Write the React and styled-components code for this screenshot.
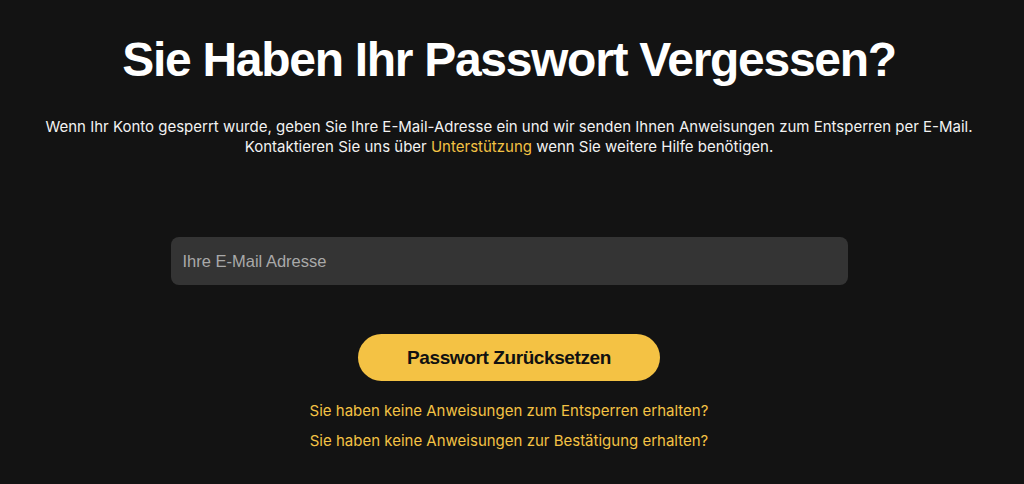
import React from "react";
import styled, { createGlobalStyle } from "styled-components";

const GlobalStyle = createGlobalStyle`
  html, body {
    margin: 0;
    padding: 0;
    background: #131313;
  }
  body {
    font-family: Inter, "Liberation Sans", sans-serif;
  }
`;

const Page = styled.main`
  min-height: 484px;
  display: flex;
  flex-direction: column;
  align-items: center;
  padding: 28px 6px 0 0;
  box-sizing: border-box;
  color: #ffffff;
`;

const Title = styled.h1`
  margin: 0;
  font-family: "Liberation Sans", Arial, sans-serif;
  font-weight: 700;
  font-size: 48px;
  line-height: 64px;
  letter-spacing: -1.3px;
  color: #ffffff;
`;

const Lead = styled.p`
  margin: 25px 0 0;
  font-size: 15px;
  line-height: 20px;
  text-align: center;
  color: #f2f2f2;
`;

const Link = styled.a`
  color: #f4c244;
  text-decoration: none;
  cursor: pointer;
`;

const Form = styled.form`
  width: 677px;
  margin-top: 80px;
  display: flex;
  flex-direction: column;
  align-items: center;
`;

const EmailInput = styled.input`
  width: 100%;
  height: 48px;
  box-sizing: border-box;
  border: none;
  border-radius: 8px;
  background: #343434;
  padding: 0 12px;
  font-family: "Liberation Sans", Arial, sans-serif;
  font-size: 16.5px;
  color: #ffffff;
  outline: none;
  &::placeholder {
    color: #a9a9a9;
  }
`;

const SubmitButton = styled.button`
  margin-top: 49px;
  width: 302px;
  height: 47px;
  border: none;
  border-radius: 24px;
  background: #f4c244;
  color: #111111;
  font-family: "Liberation Sans", Arial, sans-serif;
  font-weight: 700;
  font-size: 19px;
  letter-spacing: -0.4px;
  cursor: pointer;
`;

const HelpLinks = styled.div`
  margin-top: 20px;
  display: flex;
  flex-direction: column;
  align-items: center;
  gap: 10px;
`;

const HelpLink = styled(Link)`
  font-size: 15px;
  line-height: 20px;
`;

export default function App() {
  return (
    <>
      <GlobalStyle />
      <Page>
        <Title>Sie Haben Ihr Passwort Vergessen?</Title>
        <Lead>
          Wenn Ihr Konto gesperrt wurde, geben Sie Ihre E-Mail-Adresse ein und wir senden Ihnen Anweisungen zum Entsperren per E-Mail.
          <br />
          Kontaktieren Sie uns über <Link>Unterstützung</Link> wenn Sie weitere Hilfe benötigen.
        </Lead>
        <Form onSubmit={(e) => e.preventDefault()}>
          <EmailInput type="email" placeholder="Ihre E-Mail Adresse" />
          <SubmitButton type="submit">Passwort Zurücksetzen</SubmitButton>
        </Form>
        <HelpLinks>
          <HelpLink>Sie haben keine Anweisungen zum Entsperren erhalten?</HelpLink>
          <HelpLink>Sie haben keine Anweisungen zur Bestätigung erhalten?</HelpLink>
        </HelpLinks>
      </Page>
    </>
  );
}
